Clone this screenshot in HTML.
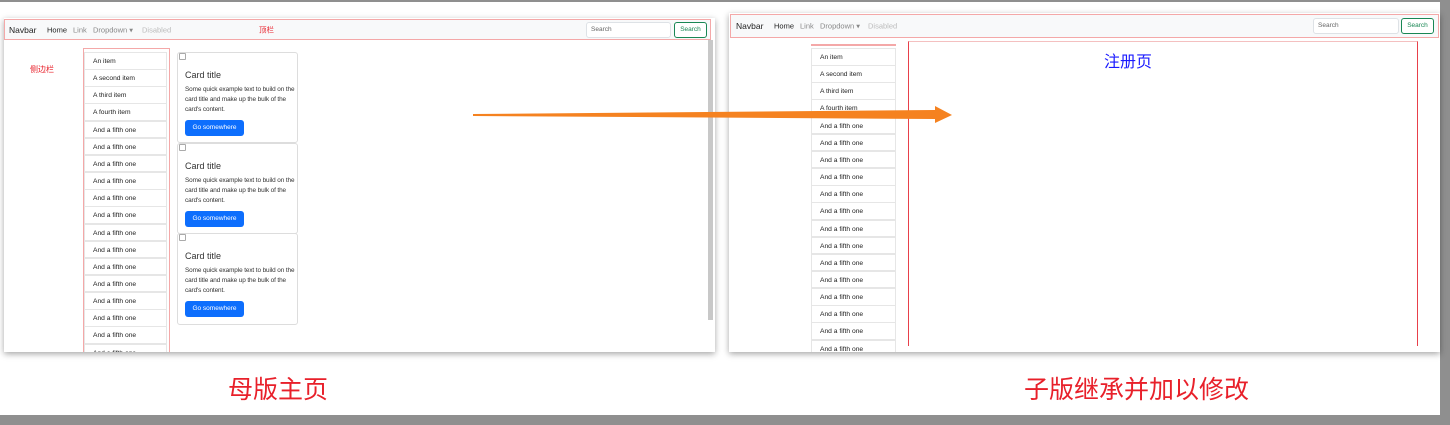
<!DOCTYPE html>
<html><head><meta charset="utf-8"><style>
*{box-sizing:border-box;margin:0;padding:0}
body{width:1450px;height:425px;overflow:hidden;background:#8f8f8f;font-family:"Liberation Sans","Noto Sans CJK SC",sans-serif;position:relative}
.slide{position:absolute;left:0;top:2px;width:1440px;height:413px;background:#fff}
.shot{position:absolute;background:#fff;box-shadow:0 2px 6px rgba(0,0,0,.35);overflow:hidden}
.nav{position:absolute;background:#f8f9fa;border:1px solid #f4a8a8;font-size:7.5px;color:#333}
.nav span{position:absolute;top:50%;transform:translateY(-50%);white-space:nowrap}
.inp{position:absolute;border:1px solid #dee2e6;background:#fff;font-size:6.5px;color:#666;padding:3px 4px;border-radius:3px}
.btn{position:absolute;border:1px solid #198754;color:#198754;font-size:6.5px;border-radius:3px;text-align:center;background:#fff}
.li{position:absolute;border:1px solid #e6e6e6;font-size:6.7px;color:#222;padding-left:8px;line-height:17px;background:#fff}
.card{position:absolute;border:1px solid #ddd;border-radius:3px;background:#fff}
.card h5{position:absolute;left:7px;top:17px;font-size:9px;font-weight:normal;color:#333}
.card p{position:absolute;left:7px;top:32px;font-size:6.4px;line-height:10.2px;color:#333;width:118px;letter-spacing:-0.1px}
.card b{position:absolute;left:7px;top:67px;width:59px;height:16px;background:#0d6efd;color:#fff;font-size:6.5px;font-weight:normal;border-radius:3px;text-align:center;line-height:16px}
.img{position:absolute;left:1px;top:0px;width:7px;height:7px;border:1px solid #aaa;border-radius:1px}
.cap{position:absolute;color:#e8202a;font-size:25px;white-space:nowrap}
</style></head><body>
<div class="slide"></div>

<div class="shot" style="left:4px;top:18px;width:711px;height:334px">
  <div class="nav" style="left:0;top:1px;width:707px;height:21px">
    <span style="left:4px;font-size:8.5px;color:#222">Navbar</span>
    <span style="left:42px;color:#222">Home</span>
    <span style="left:68px;color:#888">Link</span>
    <span style="left:88px;color:#888">Dropdown ▾</span>
    <span style="left:137px;color:#bbb">Disabled</span>
    <span style="left:254px;color:#e8202a">顶栏</span>
    <div class="inp" style="left:581px;top:2px;width:85px;height:16px">Search</div>
    <div class="btn" style="left:669px;top:2px;width:33px;height:16px;line-height:14px">Search</div>
  </div>
  <div style="position:absolute;left:26px;top:46px;font-size:8px;color:#e8202a">侧边栏</div>
  <div style="position:absolute;left:79px;top:30px;width:87px;height:310px;border:1px solid #f4a8a8"></div>
  <div style="position:absolute;left:704px;top:22px;width:5px;height:280px;background:#c8c8c8"></div>
  <div id="l1"></div>
  <div class="card" style="left:173px;top:34px;width:121px;height:91px"><i class="img"></i><h5>Card title</h5><p>Some quick example text to build on the card title and make up the bulk of the card's content.</p><b>Go somewhere</b></div>
  <div class="card" style="left:173px;top:125px;width:121px;height:91px"><i class="img"></i><h5>Card title</h5><p>Some quick example text to build on the card title and make up the bulk of the card's content.</p><b>Go somewhere</b></div>
  <div class="card" style="left:173px;top:215px;width:121px;height:92px"><i class="img"></i><h5>Card title</h5><p>Some quick example text to build on the card title and make up the bulk of the card's content.</p><b>Go somewhere</b></div>
</div>

<div class="shot" style="left:729px;top:13px;width:711px;height:339px">
  <div class="nav" style="left:1px;top:1px;width:709px;height:24px">
    <span style="left:5px;font-size:8.5px;color:#222">Navbar</span>
    <span style="left:43px;color:#222">Home</span>
    <span style="left:69px;color:#888">Link</span>
    <span style="left:89px;color:#888">Dropdown ▾</span>
    <span style="left:137px;color:#bbb">Disabled</span>
    <div class="inp" style="left:582px;top:3px;width:86px;height:16px">Search</div>
    <div class="btn" style="left:670px;top:3px;width:33px;height:16px;line-height:14px">Search</div>
  </div>
  <div style="position:absolute;left:82px;top:31px;width:85px;height:2px;background:#f4a8a8"></div>
  <div style="position:absolute;left:179px;top:28px;width:510px;height:305px;border:1px solid #e8404a;border-bottom:none;border-top-color:#f4c0c0"></div>
  <div style="position:absolute;left:375px;top:35px;font-size:16px;color:#1a1aff">注册页</div>
  <div id="r1"></div>
</div>

<svg style="position:absolute;left:0;top:0" width="1450" height="425">
  <polygon points="473,114 935,110 935,106 952,115 935,123 935,119 473,116" fill="#f58220"/>
</svg>

<div class="cap" style="left:228px;top:370px">母版主页</div>
<div class="cap" style="left:1024px;top:370px">子版继承并加以修改</div>

<script>
var L=["An item","A second item","A third item","A fourth item"];
function build(id,left,top,w,n){var h="";for(var i=0;i<n;i++){h+='<div class="li" style="left:'+left+'px;top:'+(top+i*17.15)+'px;width:'+w+'px;height:17.5px">'+(L[i]||"And a fifth one")+'</div>';}
document.getElementById(id).outerHTML=h;}
build("l1",80,34,83,19);
build("r1",82,35,85,19);
</script>
</body></html>
